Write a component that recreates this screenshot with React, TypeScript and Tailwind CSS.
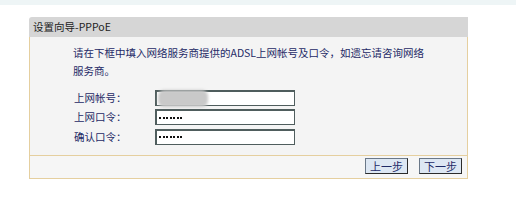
import React from 'react'

const font = { fontFamily: '"Noto Sans CJK SC", "Liberation Sans", sans-serif' }

function Dots() {
  return (
    <div className="flex gap-[1.5px]">
      {[0, 1, 2, 3, 4, 5, 6].map((i) => (
        <span key={i} className="w-[2px] h-[2px] bg-[#111]" />
      ))}
    </div>
  )
}

function Field({ label, dots, blurred }: { label: string; dots?: boolean; blurred?: boolean }) {
  return (
    <div className="flex items-center h-[19.5px]">
      <span className="w-[81px] text-[10.5px] leading-[16px] text-[#1e2a66] whitespace-nowrap">{label}</span>
      <div className="relative w-[140px] h-[16px] bg-white border border-[#4f5d5d] border-t-2 border-l-2 flex items-center pl-[2px]">
        {blurred && <div className="absolute left-[1px] top-[-2px] w-[50px] h-[17px] rounded-[6px] bg-[#c9c9c9] blur-[1.5px]" />}
        {dots && <Dots />}
      </div>
    </div>
  )
}

function Btn({ children }: { children: React.ReactNode }) {
  return (
    <button className="w-[43px] h-[16px] bg-[#dde7f3] border border-[#6a7888] border-r-[#2b2b2b] border-b-[#2b2b2b] text-[11px] leading-[14px] text-[#1e2a66] flex items-center justify-center">
      {children}
    </button>
  )
}

export default function App() {
  return (
    <div className="w-[516px] h-[205px] bg-white overflow-hidden" style={font}>
      <div className="h-[5px] bg-[#eef5f6]" />
      <div className="ml-[29px] mt-[12px] w-[439px]">
        <div className="h-[20px] bg-[#d6d6d6] rounded-tl-[3px] pl-[4px] flex items-center text-[10.5px] text-[#222] whitespace-nowrap">
          设置向导-PPPoE
        </div>
        <div className="border-x border-b border-[#e5cf9f] bg-[#f4f4f4]">
          <div className="h-[118px] pl-[43px] pt-[7px]">
            <p className="text-[10.5px] leading-[18px] text-[#1e2a66] whitespace-nowrap">
              请在下框中填入网络服务商提供的ADSL上网帐号及口令，如遗忘请咨询网络
              <br />
              服务商。
            </p>
            <div className="mt-[8px] pl-[1px]">
              <Field label="上网帐号：" blurred />
              <Field label="上网口令：" dots />
              <Field label="确认口令：" dots />
            </div>
          </div>
          <div className="h-[23px] border-t border-[#e5cf9f] bg-[#f6f6f6] flex justify-end items-start pt-[2px] pr-[5px] gap-[11px]">
            <Btn>上一步</Btn>
            <Btn>下一步</Btn>
          </div>
        </div>
      </div>
    </div>
  )
}
